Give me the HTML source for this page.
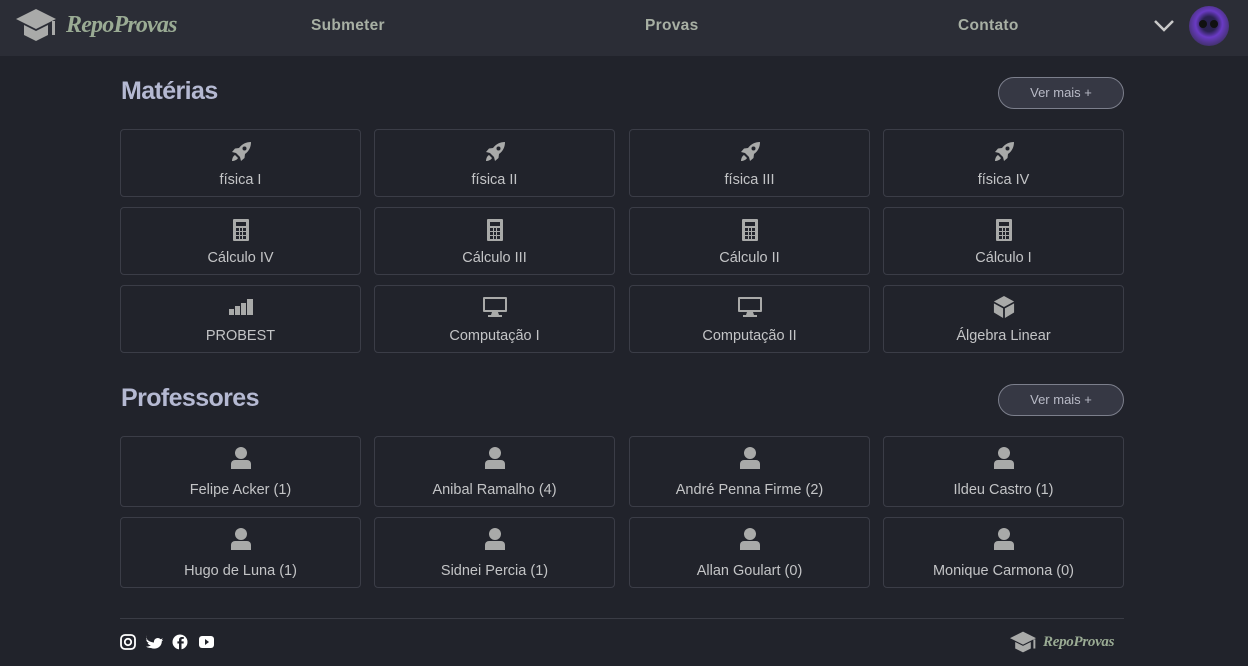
<!DOCTYPE html>
<html><head><meta charset="utf-8"><style>
*{box-sizing:border-box;margin:0;padding:0}
body{width:1248px;height:666px;background:#21232b;font-family:"Liberation Sans",sans-serif;position:relative;overflow:hidden}
.hdr{position:absolute;left:0;top:0;width:1248px;height:56px;background:#2b2d36}
.logo{position:absolute;left:66px;top:12px;font-family:"Liberation Serif",serif;font-style:italic;font-weight:bold;font-size:24px;color:#9aab94;letter-spacing:-0.8px}
.nav{position:absolute;top:17px;font-size:15.5px;font-weight:bold;color:#a8b0a4;letter-spacing:0.3px}
h2{position:absolute;left:121px;font-size:25px;font-weight:bold;color:#b5b9d2;letter-spacing:-0.6px}
.btn{position:absolute;left:998px;width:126px;height:32px;border:1px solid #7c7f8c;border-radius:16px;background:#363844;color:#b8bac6;font-size:13px;text-align:center;line-height:30px}
.card{position:absolute;width:241px;border:1px solid #3b3d47;border-radius:4px;text-align:center;color:#c3c4c6;font-size:14.5px}
.card svg{position:absolute;left:50%;transform:translateX(-50%);fill:#a9aaa9}
.card span{position:absolute;left:0;right:0}
.line{position:absolute;left:120px;top:618px;width:1004px;height:1px;background:#3a3c45}
</style></head><body>
<svg width="0" height="0" style="position:absolute">
<defs>
<symbol id="rocket" viewBox="0 0 24 24"><path d="M22 2c-5 0-9 2-12 6l-4 .5L3 12l4 1 4 4 1 4 3.5-3 .5-4c4-3 6-7 6-12zM15.5 6.5a2 2 0 1 1 0 4 2 2 0 0 1 0-4zM6 15c-2 1-3 4-3 6 2 0 5-1 6-3z"/></symbol>
<symbol id="calc" viewBox="0 0 16 22"><path d="M1 0h14a1 1 0 0 1 1 1v20a1 1 0 0 1-1 1H1a1 1 0 0 1-1-1V1a1 1 0 0 1 1-1zM3 3v4h10V3zM3 9v3h3V9zm4 0v3h2V9zm3 0v3h3V9zM3 13v3h3v-3zm4 0v3h2v-3zm3 0v3h3v-3zM3 17v3h3v-3zm4 0v3h2v-3zm3 0v3h3v-3z"/></symbol>
<symbol id="bars" viewBox="0 0 24 16"><rect x="0" y="10" width="5" height="6"/><rect x="6" y="7" width="5" height="9"/><rect x="12" y="4" width="5" height="12"/><rect x="18" y="0" width="6" height="16"/></symbol>
<symbol id="mon" viewBox="0 0 24 20"><path d="M1 0h22a1 1 0 0 1 1 1v13a1 1 0 0 1-1 1H1a1 1 0 0 1-1-1V1a1 1 0 0 1 1-1zm1 2v11h20V2zM9 15h6l1 3h3v2H5v-2h3z"/></symbol>
<symbol id="cube" viewBox="0 0 22 24"><path d="M11 0l11 6-11 6L0 6zM0 8l10 5.5V24L0 18zM22 8l-10 5.5V24l10-6z"/></symbol>
<symbol id="user" viewBox="0 0 20 22"><circle cx="10" cy="6" r="6"/><path d="M4 13h12a4 4 0 0 1 4 4v5H0v-5a4 4 0 0 1 4-4z"/></symbol>
<symbol id="cap" viewBox="0 0 40 32"><path d="M20 0l20 10-20 10L0 10zM8 16l12 6 12-6v10l-12 6-12-6zM36 12h3v14h-3z"/></symbol>
</defs></svg>

<div class="hdr">
<svg style="position:absolute;left:16px;top:9px" width="40" height="32" fill="#a9aaa9"><use href="#cap"/></svg>
<div class="logo">RepoProvas</div>
<div class="nav" style="left:311px">Submeter</div>
<div class="nav" style="left:645px">Provas</div>
<div class="nav" style="left:958px">Contato</div>
<svg style="position:absolute;left:1153px;top:19px" width="22" height="14" fill="none" stroke="#c9c9c9" stroke-width="2.5"><path d="M2 2l9 9 9-9"/></svg>
<div style="position:absolute;left:1189px;top:6px;width:40px;height:40px;border-radius:50%;background:radial-gradient(circle at 50% 45%,#2a2250 0 25%,#6a3bc4 45%,#3b2f5e 80%)"></div>
<div style="position:absolute;left:1199px;top:20px;width:8px;height:8px;border-radius:50%;background:#111"></div>
<div style="position:absolute;left:1210px;top:20px;width:8px;height:8px;border-radius:50%;background:#111"></div>
</div>

<h2 style="top:77px">Matérias</h2>
<div class="btn" style="top:77px">Ver mais +</div>

<div class="card" style="left:120px;top:129px;height:68px"><svg style="top:10px" width="24" height="24"><use href="#rocket"/></svg><span style="top:42px">física I</span></div>
<div class="card" style="left:374px;top:129px;height:68px"><svg style="top:10px" width="24" height="24"><use href="#rocket"/></svg><span style="top:42px">física II</span></div>
<div class="card" style="left:629px;top:129px;height:68px"><svg style="top:10px" width="24" height="24"><use href="#rocket"/></svg><span style="top:42px">física III</span></div>
<div class="card" style="left:883px;top:129px;height:68px"><svg style="top:10px" width="24" height="24"><use href="#rocket"/></svg><span style="top:42px">física IV</span></div>

<div class="card" style="left:120px;top:207px;height:68px"><svg style="top:11px" width="16" height="22"><use href="#calc"/></svg><span style="top:42px">Cálculo IV</span></div>
<div class="card" style="left:374px;top:207px;height:68px"><svg style="top:11px" width="16" height="22"><use href="#calc"/></svg><span style="top:42px">Cálculo III</span></div>
<div class="card" style="left:629px;top:207px;height:68px"><svg style="top:11px" width="16" height="22"><use href="#calc"/></svg><span style="top:42px">Cálculo II</span></div>
<div class="card" style="left:883px;top:207px;height:68px"><svg style="top:11px" width="16" height="22"><use href="#calc"/></svg><span style="top:42px">Cálculo I</span></div>

<div class="card" style="left:120px;top:285px;height:68px"><svg style="top:13px" width="24" height="16"><use href="#bars"/></svg><span style="top:42px">PROBEST</span></div>
<div class="card" style="left:374px;top:285px;height:68px"><svg style="top:11px" width="24" height="20"><use href="#mon"/></svg><span style="top:42px">Computação I</span></div>
<div class="card" style="left:629px;top:285px;height:68px"><svg style="top:11px" width="24" height="20"><use href="#mon"/></svg><span style="top:42px">Computação II</span></div>
<div class="card" style="left:883px;top:285px;height:68px"><svg style="top:10px" width="22" height="22"><use href="#cube"/></svg><span style="top:42px">Álgebra Linear</span></div>

<h2 style="top:384px">Professores</h2>
<div class="btn" style="top:384px">Ver mais +</div>

<div class="card" style="left:120px;top:436px;height:71px"><svg style="top:10px" width="20" height="22"><use href="#user"/></svg><span style="top:45px">Felipe Acker (1)</span></div>
<div class="card" style="left:374px;top:436px;height:71px"><svg style="top:10px" width="20" height="22"><use href="#user"/></svg><span style="top:45px">Anibal Ramalho (4)</span></div>
<div class="card" style="left:629px;top:436px;height:71px"><svg style="top:10px" width="20" height="22"><use href="#user"/></svg><span style="top:45px">André Penna Firme (2)</span></div>
<div class="card" style="left:883px;top:436px;height:71px"><svg style="top:10px" width="20" height="22"><use href="#user"/></svg><span style="top:45px">Ildeu Castro (1)</span></div>

<div class="card" style="left:120px;top:517px;height:71px"><svg style="top:10px" width="20" height="22"><use href="#user"/></svg><span style="top:45px">Hugo de Luna (1)</span></div>
<div class="card" style="left:374px;top:517px;height:71px"><svg style="top:10px" width="20" height="22"><use href="#user"/></svg><span style="top:45px">Sidnei Percia (1)</span></div>
<div class="card" style="left:629px;top:517px;height:71px"><svg style="top:10px" width="20" height="22"><use href="#user"/></svg><span style="top:45px">Allan Goulart (0)</span></div>
<div class="card" style="left:883px;top:517px;height:71px"><svg style="top:10px" width="20" height="22"><use href="#user"/></svg><span style="top:45px">Monique Carmona (0)</span></div>

<div class="line"></div>
<svg style="position:absolute;left:120px;top:634px" width="100" height="16" fill="none" stroke="#fff" stroke-width="1.8">
<rect x="1" y="1" width="14" height="14" rx="4"/><circle cx="8" cy="8" r="3.2"/>
<path d="M26 4.5c2 2.5 5 3.8 8 4 -.4-2.6 1.6-4.5 3.8-4.5 1.1 0 2.1.5 2.8 1.2l2.2-.8-1.2 1.8 1.6-.3-1.4 1.5C41.8 13 36 16 31 14c-2 0-3.5-.5-5-1.4 1.8.2 3.5-.3 4.8-1.3-1.5 0-2.7-1-3.2-2.3h1.5c-1.6-.4-2.8-1.8-2.8-3.5.5.3 1 .4 1.5.4-1.5-1-2-3-1.3-4.4z" fill="#fff" stroke="none"/>
<circle cx="60" cy="8" r="7.5" fill="#fff" stroke="none"/><path d="M61.5 16V9.5h2.2V7.4h-2.2V6c0-.7.3-1.1 1.1-1.1h1.2V3h-1.8c-2.1 0-3 1.2-3 3v1.4h-1.6v2.1H59V16z" fill="#21232b" stroke="none"/>
<rect x="79" y="2" width="15" height="12" rx="3" fill="#fff" stroke="none"/><path d="M85 5v6l4-3z" fill="#21232b" stroke="none"/>
</svg>
<svg style="position:absolute;left:1010px;top:631px" width="26" height="22" fill="#a9aaa9"><use href="#cap"/></svg>
<div style="position:absolute;left:1043px;top:634px;font-family:'Liberation Serif',serif;font-style:italic;font-weight:bold;font-size:15px;color:#9aab94;letter-spacing:-0.3px">RepoProvas</div>
</body></html>
